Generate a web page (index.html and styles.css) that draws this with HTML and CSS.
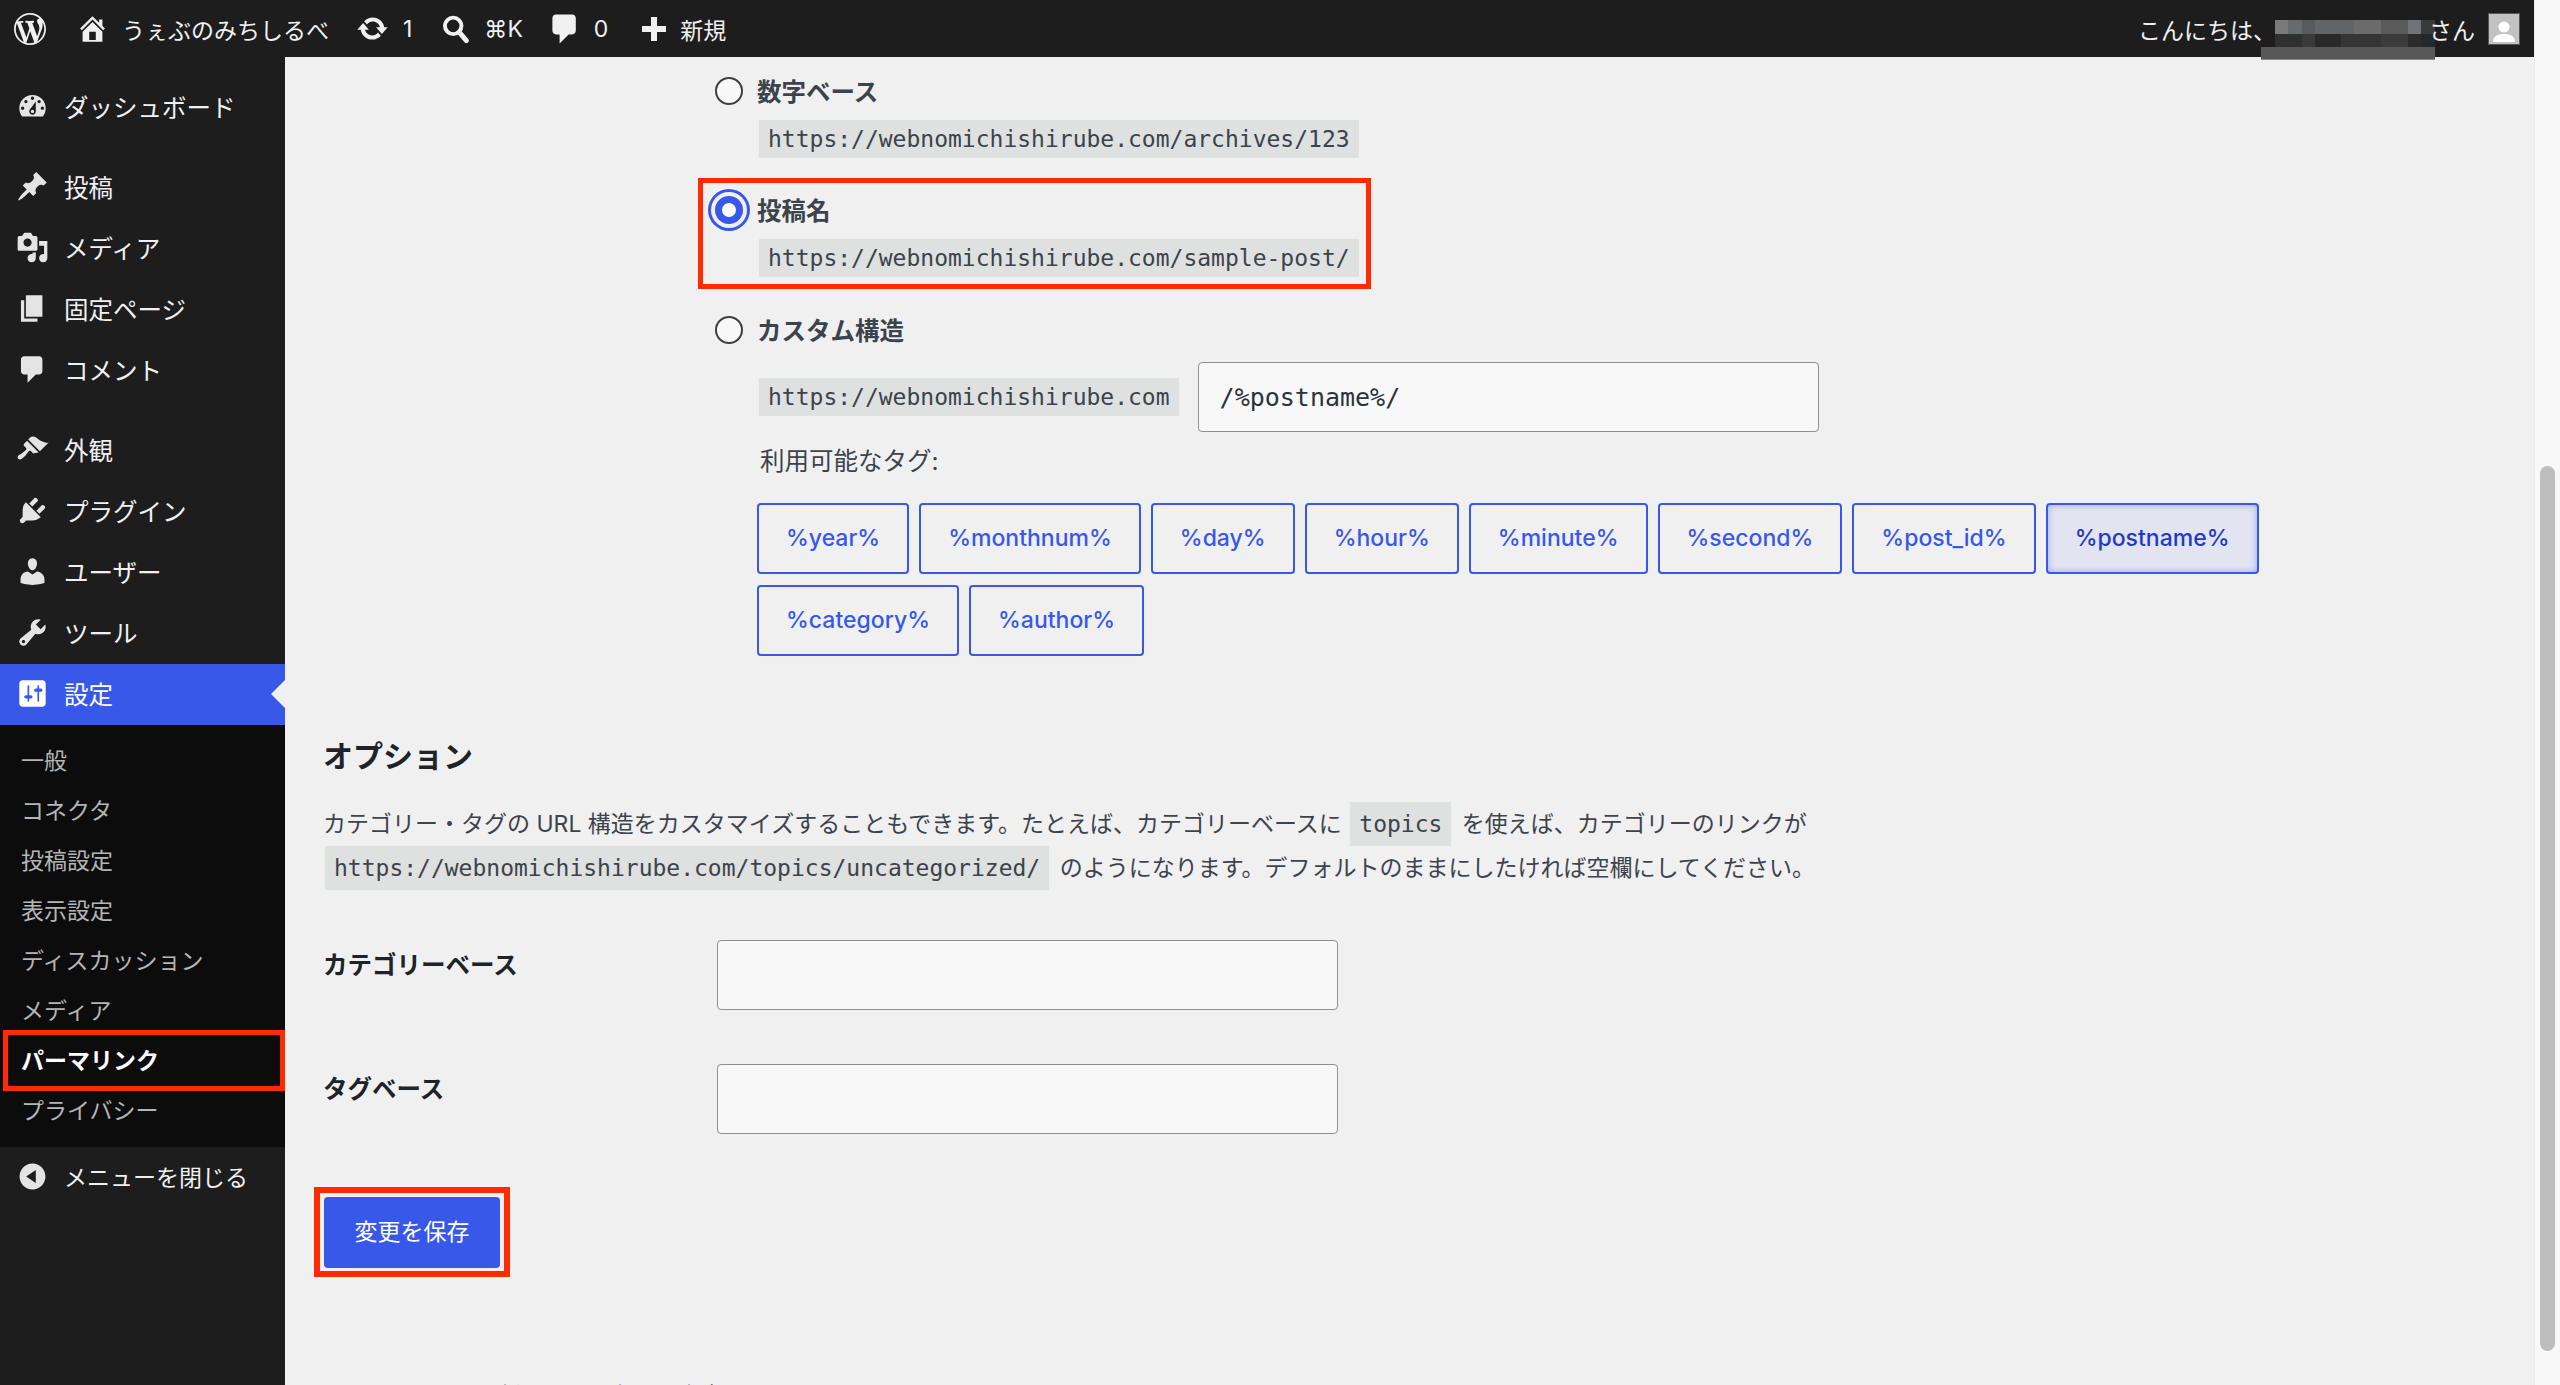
FILE: index.html
```html
<!DOCTYPE html>
<html lang="ja">
<head>
    <meta charset="UTF-8">
    <title>パーマリンク設定 ‹ うぇぶのみちしるべ</title>
    <link rel="stylesheet" href="styles.css">
</head>
<body>
    <div class="page">
        <!-- admin bar -->
        <header class="adminbar">
            <svg class="ab-logo" viewBox="0 0 20 20"><path d="M20 10c0-5.51-4.49-10-10-10C4.48 0 0 4.49 0 10c0 5.52 4.48 10 10 10 5.51 0 10-4.48 10-10zM7.78 15.37L4.37 6.22c.55-.02 1.17-.08 1.17-.08.5-.06.44-1.13-.06-1.11 0 0-1.45.11-2.37.11-.18 0-.37 0-.58-.01C4.12 2.69 6.87 1.11 10 1.11c2.33 0 4.45.87 6.05 2.34-.68-.11-1.65.39-1.65 1.58 0 .74.45 1.36.9 2.1.35.61.55 1.36.55 2.46 0 1.49-1.4 5-1.4 5l-3.03-8.37c.54-.02.82-.17.82-.17.5-.05.44-1.25-.06-1.22 0 0-1.44.12-2.38.12-.87 0-2.33-.12-2.33-.12-.5-.03-.56 1.2-.06 1.22l.92.08 1.26 3.41zM17.41 10c.24-.64.74-1.87.43-4.25.7 1.29 1.05 2.71 1.05 4.25 0 3.29-1.73 6.24-4.4 7.78.97-2.59 1.94-5.2 2.92-7.78zM6.1 18.09C3.12 16.65 1.11 13.53 1.11 10c0-1.3.23-2.48.72-3.59C3.25 10.3 4.67 14.2 6.1 18.09zm4.03-6.63l2.58 6.98c-.86.29-1.76.45-2.71.45-.79 0-1.57-.11-2.29-.33.81-2.38 1.62-4.74 2.42-7.1z"/></svg>
            <a class="ab-item ab-home">
                <svg class="ab-icon" viewBox="0 0 20 20"><path d="M16 8.5l1.53 1.53-1.06 1.06L10 4.62l-6.47 6.47-1.06-1.06L10 2.5l4 4v-2h2v4zm-6-2.46l6 5.99V18H4v-5.97zM12 17v-5H8v5h4z"/></svg>
                <span>うぇぶのみちしるべ</span>
            </a>
            <a class="ab-item ab-updates">
                <svg class="ab-icon" viewBox="0 0 20 20"><path d="M10.2 3.28c3.53 0 6.43 2.61 6.92 6h2.08l-3.5 4-3.5-4h2.32c-.45-1.97-2.21-3.45-4.32-3.45-1.45 0-2.73.71-3.54 1.78L4.95 5.66C6.23 4.2 8.11 3.28 10.2 3.28zm-.4 13.44c-3.52 0-6.43-2.61-6.92-6H.8l3.5-4c1.17 1.33 2.33 2.67 3.5 4H5.48c.45 1.97 2.21 3.45 4.32 3.45 1.45 0 2.73-.71 3.54-1.78l1.71 1.95c-1.28 1.46-3.15 2.38-5.25 2.38z"/></svg>
                <span>1</span>
            </a>
            <a class="ab-item ab-search">
                <svg class="ab-icon" viewBox="0 0 20 20"><circle class="search-ring" cx="8.6" cy="8.4" r="5"/><path class="search-handle" d="M12.2 12.2l4.4 5.2"/></svg>
                <span>⌘K</span>
            </a>
            <a class="ab-item ab-comments">
                <svg class="ab-icon-lg" viewBox="0 0 20 20"><path d="M5 2h9c1.1 0 2 .9 2 2v7c0 1.1-.9 2-2 2h-2l-5 5v-5H5c-1.1 0-2-.9-2-2V4c0-1.1.9-2 2-2z"/></svg>
                <span>0</span>
            </a>
            <a class="ab-item ab-new">
                <svg class="ab-plus" viewBox="0 0 24 24"><path d="M9 0h6v9h9v6h-9v9H9v-9H0V9h9z"/></svg>
                <span>新規</span>
            </a>
            <div class="ab-account">
                <span>こんにちは、</span>
                <div class="redact"><div class="redact-top"></div><div class="redact-mid"></div><div class="redact-bar"></div></div>
                <span>さん</span>
                <svg class="avatar" viewBox="0 0 30 30"><rect width="30" height="30" fill="#c2c2c2"/><circle cx="15" cy="13" r="5.5" fill="#fff"/><path d="M4 28c0-6 5-8 11-8s11 2 11 8z" fill="#fff"/></svg>
            </div>
        </header>

        <div class="below">
            <!-- side menu -->
            <nav class="sidebar">
                <ul class="menu">
                    <li class="menu-item">
                        <svg class="menu-icon" viewBox="0 0 20 20"><path d="M3.76 16h12.48c1.1-1.37 1.76-3.11 1.76-5 0-4.42-3.58-8-8-8s-8 3.58-8 8c0 1.89.66 3.63 1.76 5zM10 4c.55 0 1 .45 1 1s-.45 1-1 1-1-.45-1-1 .45-1 1-1zM6 6c.55 0 1 .45 1 1s-.45 1-1 1-1-.45-1-1 .45-1 1-1zm8 0c.55 0 1 .45 1 1s-.45 1-1 1-1-.45-1-1 .45-1 1-1zm-5.37 5.55L12 7v6c0 1.1-.9 2-2 2s-2-.9-2-2c0-.57.24-1.08.63-1.45zM4 10c.55 0 1 .45 1 1s-.45 1-1 1-1-.45-1-1 .45-1 1-1zm12 0c.55 0 1 .45 1 1s-.45 1-1 1-1-.45-1-1 .45-1 1-1zm-5 3c0-.55-.45-1-1-1s-1 .45-1 1 .45 1 1 1 1-.45 1-1z"/></svg>
                        ダッシュボード
                    </li>
                    <li class="menu-item menu-gap">
                        <svg class="menu-icon" viewBox="0 0 20 20"><path d="M10.44 3.02l1.82-1.82 6.36 6.35-1.83 1.82c-1.05-.68-2.48-.57-3.41.36l-.75.75c-.92.93-1.04 2.35-.35 3.41l-1.83 1.82-2.41-2.41-2.8 2.79c-.42.42-3.38 2.71-3.8 2.29s1.86-3.39 2.28-3.81l2.79-2.79L4.1 9.36l1.83-1.82c1.05.69 2.48.57 3.4-.36l.75-.75c.93-.92 1.05-2.35.36-3.41z"/></svg>
                        投稿
                    </li>
                    <li class="menu-item">
                        <svg class="menu-icon" viewBox="0 0 20 20"><path d="M13 11V4c0-.55-.45-1-1-1h-1.67L9 1H5L3.67 3H2c-.55 0-1 .45-1 1v7c0 .55.45 1 1 1h10c.55 0 1-.45 1-1zM7 4.5c1.38 0 2.5 1.12 2.5 2.5S8.38 9.5 7 9.5 4.5 8.38 4.5 7 5.62 4.5 7 4.5zM14 6h5v10.5c0 1.38-1.12 2.5-2.5 2.5S14 17.88 14 16.5s1.12-2.5 2.5-2.5c.17 0 .34.02.5.05V9h-3V6zm-4 8.05V13h2v3.5c0 1.38-1.12 2.5-2.5 2.5S7 17.88 7 16.5 8.12 14 9.5 14c.17 0 .34.02.5.05z"/></svg>
                        メディア
                    </li>
                    <li class="menu-item">
                        <svg class="menu-icon" viewBox="0 0 20 20"><path d="M6 15V2h10v13H6zm-1 1h8v2H3V5h2v11z"/></svg>
                        固定ページ
                    </li>
                    <li class="menu-item">
                        <svg class="menu-icon" viewBox="0 0 20 20"><path d="M5 2h9c1.1 0 2 .9 2 2v7c0 1.1-.9 2-2 2h-2l-5 5v-5H5c-1.1 0-2-.9-2-2V4c0-1.1.9-2 2-2z"/></svg>
                        コメント
                    </li>
                    <li class="menu-item menu-gap">
                        <svg class="menu-icon" viewBox="0 0 20 20"><path d="M14.48 11.06L7.41 3.99l1.5-1.5c.5-.56 2.3-.47 3.51.32 1.21.8 1.43 1.28 2.91 2.1 1.18.64 2.45 1.26 4.45.85zm-.71.71L6.7 4.7 4.93 6.47c-.39.39-.39 1.02 0 1.41l1.06 1.06c.39.39.39 1.03 0 1.42-.6.6-1.43 1.11-2.21 1.69-.35.26-.7.53-1.01.84C1.43 13.23.4 14.67 1.4 15.67c.99 1 2.43-.03 3.76-1.36.31-.31.58-.66.85-1.02.57-.78 1.08-1.61 1.69-2.21.39-.39 1.02-.39 1.41 0l1.06 1.06c.39.39 1.02.39 1.41 0z"/></svg>
                        外観
                    </li>
                    <li class="menu-item">
                        <svg class="menu-icon" viewBox="0 0 20 20"><path d="M13.11 4.36L9.87 7.6 8 5.73l3.24-3.24c.35-.34 1.05-.2 1.56.32.52.51.66 1.21.31 1.55zm-8 1.77l.91-1.12 9.01 9.01-1.19.84c-.71.71-2.63 1.16-3.82 1.16H6.14L4.9 17.26c-.59.59-1.54.59-2.12 0-.59-.58-.59-1.53 0-2.12l1.24-1.24v-3.88c0-1.13.4-3.19 1.09-3.89zm7.26 3.97l3.24-3.24c.34-.35 1.04-.21 1.55.31.52.51.66 1.21.31 1.55l-3.24 3.25z"/></svg>
                        プラグイン
                    </li>
                    <li class="menu-item">
                        <svg class="menu-icon" viewBox="0 0 20 20"><path d="M10 9.25c-2.27 0-2.73-3.44-2.73-3.44C7 4.02 7.82 2 9.97 2c2.16 0 2.98 2.02 2.71 3.81 0 0-.41 3.44-2.68 3.44zm0 2.57L12.72 10c2.39 0 4.52 2.33 4.52 4.53v2.49s-3.65 1.13-7.24 1.13c-3.65 0-7.24-1.13-7.24-1.13v-2.49c0-2.25 1.94-4.48 4.47-4.48z"/></svg>
                        ユーザー
                    </li>
                    <li class="menu-item">
                        <svg class="menu-icon" viewBox="0 0 20 20"><path d="M16.68 9.77c-1.34 1.34-3.3 1.67-4.95.99l-5.41 6.52c-.99.99-2.59.99-3.58 0s-.99-2.59 0-3.57l6.52-5.42c-.68-1.65-.35-3.61.99-4.95 1.28-1.28 3.12-1.62 4.72-1.06l-2.89 2.89 2.82 2.82 2.86-2.87c.53 1.58.18 3.39-1.08 4.65zM3.81 16.21c.4.39 1.04.39 1.43 0 .4-.4.4-1.04 0-1.43-.39-.4-1.03-.4-1.43 0-.39.39-.39 1.03 0 1.43z"/></svg>
                        ツール
                    </li>
                    <li class="menu-item menu-current">
                        <svg class="menu-icon" viewBox="0 0 20 20"><path d="M18 16V4c0-1.1-.9-2-2-2H4c-1.1 0-2 .9-2 2v12c0 1.1.9 2 2 2h12c1.1 0 2-.9 2-2zM8 11h1c.55 0 1 .45 1 1s-.45 1-1 1H8v1.5c0 .28-.22.5-.5.5s-.5-.22-.5-.5V13H6c-.55 0-1-.45-1-1s.45-1 1-1h1V5.5c0-.28.22-.5.5-.5s.5.22.5.5V11zm5-2h-1c-.55 0-1-.45-1-1s.45-1 1-1h1V5.5c0-.28.22-.5.5-.5s.5.22.5.5V7h1c.55 0 1 .45 1 1s-.45 1-1 1h-1v5.5c0 .28-.22.5-.5.5s-.5-.22-.5-.5V9z"/></svg>
                        設定
                    </li>
                </ul>
                <ul class="submenu">
                    <li>一般</li>
                    <li>コネクタ</li>
                    <li>投稿設定</li>
                    <li>表示設定</li>
                    <li>ディスカッション</li>
                    <li>メディア</li>
                    <li class="sub-current">パーマリンク</li>
                    <li>プライバシー</li>
                </ul>
                <div class="menu-item menu-collapse">
                    <svg class="menu-icon" viewBox="0 0 20 20"><path d="M10 2.16c4.33 0 7.84 3.51 7.84 7.84s-3.51 7.84-7.84 7.84S2.16 14.33 2.16 10 5.71 2.16 10 2.16zm2 11.72V6.12L6.18 9.97z"/></svg>
                    メニューを閉じる
                </div>
            </nav>

            <main class="content">
                <form>
                    <div class="permalink-list">
                        <label class="option-head">
                            <input type="radio" name="structure">
                            数字ベース
                        </label>
                        <code class="url">https://webnomichishirube.com/archives/123</code>

                        <div class="option-marked">
                            <label class="option-head">
                                <input type="radio" name="structure" checked>
                                投稿名
                            </label>
                            <code class="url">https://webnomichishirube.com/sample-post/</code>
                        </div>

                        <label class="option-head">
                            <input type="radio" name="structure">
                            カスタム構造
                        </label>
                        <div class="custom-row">
                            <code class="url">https://webnomichishirube.com</code>
                            <input class="text-input custom-input" type="text" value="/%postname%/">
                        </div>
                        <div class="tags-title">利用可能なタグ:</div>
                        <div class="tags">
                            <button type="button" class="tag">%year%</button>
                            <button type="button" class="tag">%monthnum%</button>
                            <button type="button" class="tag">%day%</button>
                            <button type="button" class="tag">%hour%</button>
                            <button type="button" class="tag">%minute%</button>
                            <button type="button" class="tag">%second%</button>
                            <button type="button" class="tag">%post_id%</button>
                            <button type="button" class="tag tag-active">%postname%</button>
                            <button type="button" class="tag">%category%</button>
                            <button type="button" class="tag">%author%</button>
                        </div>
                    </div>

                    <h2>オプション</h2>
                    <p class="help">
                        カテゴリー・タグの URL 構造をカスタマイズすることもできます。たとえば、カテゴリーベースに <code>topics</code> を使えば、カテゴリーのリンクが<br>
                        <code>https://webnomichishirube.com/topics/uncategorized/</code> のようになります。デフォルトのままにしたければ空欄にしてください。
                    </p>

                    <div class="field">
                        <label for="category_base">カテゴリーベース</label>
                        <input class="text-input" id="category_base" type="text">
                    </div>
                    <div class="field">
                        <label for="tag_base">タグベース</label>
                        <input class="text-input" id="tag_base" type="text">
                    </div>

                    <div class="save-marked">
                        <button type="button" class="save-button">変更を保存</button>
                    </div>
                </form>

                <footer class="foot">
                    <span><a>WordPress</a> のご利用ありがとうございます。</span>
                    <span>バージョン 6.8.1</span>
                </footer>
            </main>
        </div>
    </div>

    <div class="scrollbar"><div class="scroll-thumb"></div></div>
</body>
</html>
```
FILE: styles.css
```css
html, body {
    height: 100%;
}
body {
    margin: 0;
    display: flex;
    height: 100vh;
    overflow: hidden;
    background-color: #f0f0f1;
    color: #3c434a;
    font-family: Inter, "Noto Sans CJK JP", "DejaVu Sans", sans-serif;
    font-size: 23px;
}
ul {
    list-style: none;
    margin: 0;
    padding: 0;
}
.page {
    flex: 1;
    min-width: 0;
    display: flex;
    flex-direction: column;
}

/* admin bar */
.adminbar {
    position: relative;
    z-index: 2;
    flex: 0 0 57px;
    min-height: 0;
    display: flex;
    align-items: center;
    background-color: #1d1d1d;
    color: #f0f0f1;
    font-size: 23px;
    padding: 0 15px 0 14px;
}
.adminbar svg {
    fill: #f0f0f1;
    flex-shrink: 0;
}
.ab-logo {
    width: 32px;
    height: 32px;
}
.ab-item {
    display: flex;
    align-items: center;
}
.ab-icon {
    width: 33px;
    height: 33px;
}
.ab-icon-lg {
    width: 36px;
    height: 36px;
}
.ab-plus {
    width: 24px;
    height: 24px;
}
.ab-home {
    margin-left: 30px;
    gap: 13px;
}
.ab-updates {
    margin-left: 27px;
    gap: 14px;
}
.ab-search {
    margin-left: 27px;
    gap: 12px;
}
.ab-comments {
    margin-left: 24px;
    gap: 11px;
}
.ab-new {
    margin-left: 34px;
    gap: 14px;
}
.adminbar .search-ring {
    fill: none;
    stroke: #f0f0f1;
    stroke-width: 2.4;
}
.adminbar .search-handle {
    fill: none;
    stroke: #f0f0f1;
    stroke-width: 3;
    stroke-linecap: round;
}
.ab-account {
    margin-left: auto;
    height: 57px;
    display: flex;
    align-items: center;
}
.ab-account .avatar {
    width: 30px;
    height: 30px;
    margin-left: 14px;
    outline: 1px solid #555;
}
.redact {
    align-self: flex-start;
    flex-shrink: 0;
    width: 174px;
    height: 40px;
    margin: 20px -6px 0 -15px;
    display: flex;
    flex-direction: column;
}
.redact-top {
    height: 14px;
    margin-left: 14px;
    background: linear-gradient(90deg, #7a7a7a 0 13px, #666b6e 13px 27px, #595a5a 27px 40px, #626568 40px 79px, #6b6b6b 79px 106px, #5a5a5a 106px 133px, #707478 133px 146px, #3a3a3a 146px);
}
.redact-mid {
    height: 13px;
    margin-left: 14px;
    background: linear-gradient(90deg, #303030 0 27px, #3a3a3a 27px 40px, #292929 40px 66px, #353535 66px 106px, #3b3b3b 106px 133px, #2c2c2c 133px 146px, #222a30 146px);
}
.redact-bar {
    flex: 1;
    background-color: #585858;
    border-bottom: 1px solid #8a8a8a;
}

.below {
    flex: 1;
    min-height: 0;
    display: flex;
}

/* side menu */
.sidebar {
    flex: 0 0 285px;
    background-color: #1d1d1d;
    color: #f0f0f1;
    padding-top: 20px;
    font-size: 24.5px;
}
.menu-item {
    box-sizing: border-box;
    display: flex;
    align-items: center;
    gap: 15px;
    height: 61px;
    padding: 0 0 2px 16px;
}
.menu-gap {
    margin-top: 19px;
}
.menu-icon {
    width: 33px;
    height: 33px;
    fill: #e4e4e5;
    flex-shrink: 0;
}
.menu-current {
    position: relative;
    background-color: #3858e9;
    color: #fff;
}
.menu-current .menu-icon {
    fill: #fff;
}
.menu-current::after {
    content: "";
    position: absolute;
    right: 0;
    top: 16px;
    border: 14px solid transparent;
    border-right-color: #f0f0f1;
    border-left-width: 0;
}
.submenu {
    background-color: #0c0c0c;
    padding: 9px 0 13px;
    font-size: 23px;
    color: #b4b5b6;
}
.submenu li {
    position: relative;
    display: flex;
    align-items: center;
    height: 50px;
    padding-left: 21px;
}
.sub-current {
    color: #fff;
    font-weight: 700;
}
.sub-current::after {
    content: "";
    position: absolute;
    top: -4px;
    bottom: -7px;
    left: 3px;
    right: 0;
    border: 5px solid #ff2a00;
}
.menu-collapse {
    height: 60px;
    font-size: 23px;
}

/* main */
.content {
    flex: 1;
    min-width: 0;
    padding-left: 38px;
    overflow: hidden;
}
.permalink-list {
    margin-left: 392px;
    padding-top: 20px;
}
.option-head {
    box-sizing: border-box;
    display: flex;
    align-items: center;
    gap: 14px;
    height: 28px;
    padding-bottom: 2px;
    font-size: 24.5px;
    font-weight: 700;
}
input[type="radio"] {
    appearance: none;
    box-sizing: border-box;
    width: 28px;
    height: 28px;
    margin: 2px 0 0;
    border: 2px solid #3a3f44;
    border-radius: 50%;
    background-color: #f8f8f9;
}
input[type="radio"]:checked {
    border: 7px solid #3858e9;
    background-color: #fff;
    box-shadow: 0 0 0 4px #f0f0f1, 0 0 0 7px #3858e9;
}
code {
    font-family: "DejaVu Sans Mono", monospace;
    font-size: 23px;
    background-color: #dfe0e0;
}
.url {
    display: flex;
    align-items: center;
    box-sizing: border-box;
    width: fit-content;
    height: 38px;
    padding: 0 9px;
    margin: 15px 0 0 44px;
}
.option-marked {
    width: fit-content;
    margin: 20px 0 27px -17px;
    padding: 13px 0 7px 12px;
    border: 5px solid #ff2a00;
}
.option-marked .url {
    margin-right: 7px;
}
.custom-row {
    display: flex;
    align-items: center;
    gap: 19px;
    margin: 18px 0 0 44px;
}
.custom-row .url {
    margin: 0;
}
.text-input {
    box-sizing: border-box;
    width: 621px;
    height: 70px;
    padding: 0 21px;
    border: 1.5px solid #8c8f94;
    border-radius: 4px;
    background-color: #f8f8f9;
    color: #2c3338;
    font-family: "DejaVu Sans Mono", monospace;
    font-size: 25px;
}
.tags-title {
    margin: 14px 0 0 45px;
    height: 30px;
    line-height: 30px;
    font-size: 24.5px;
}
.tags {
    display: flex;
    flex-wrap: wrap;
    gap: 11px 10px;
    width: 1560px;
    margin: 27px 0 0 42px;
}
.tag {
    box-sizing: border-box;
    height: 71px;
    padding: 0 27px 2px;
    border: 2.5px solid #3858e9;
    border-radius: 4px;
    background: transparent;
    color: #3858e9;
    font-family: Inter, sans-serif;
    font-size: 23px;
    font-weight: 500;
}
.tag-active {
    background-color: #e2e4f1;
    color: #1f3bc4;
    box-shadow: inset 0 0 6px rgba(56, 88, 233, .45);
}
h2 {
    margin: 80px 0 1px;
    height: 40px;
    line-height: 40px;
    font-size: 30px;
    font-weight: 700;
    color: #1d2327;
}
.help {
    margin: 26px 0 0;
    line-height: 44px;
}
.help code {
    margin: 0 4px 0 2px;
    padding: 9px;
}
.field {
    display: flex;
    align-items: flex-start;
    margin-top: 50px;
}
.field + .field {
    margin-top: 54px;
}
.field label {
    width: 394px;
    padding-top: 10px;
    line-height: 30px;
    font-size: 24.5px;
    font-weight: 700;
    color: #1d2327;
}
.save-marked {
    width: fit-content;
    margin: 53px 0 0 -9px;
    padding: 4px 4px 3px;
    border: 6px solid #ff2a00;
}
.save-button {
    display: block;
    box-sizing: border-box;
    width: 176px;
    height: 71px;
    padding-bottom: 6px;
    border: none;
    border-radius: 4px;
    background-color: #3858e9;
    color: #fff;
    font-family: inherit;
    font-size: 23px;
}
.foot {
    display: flex;
    justify-content: space-between;
    margin-top: 104px;
    padding-right: 33px;
    line-height: 30px;
    font-size: 23px;
}
.foot a {
    margin-right: 14px;
    color: #3858e9;
}

/* scrollbar track, the shot was taken with it showing */
.scrollbar {
    box-sizing: border-box;
    flex: 0 0 26px;
    height: 100%;
    padding: 466px 5px 34px;
    background-color: #f8f8f9;
    border-left: 1px solid #ececed;
}
.scroll-thumb {
    height: 100%;
    border-radius: 8px;
    background-color: #bdbdbd;
}
```
